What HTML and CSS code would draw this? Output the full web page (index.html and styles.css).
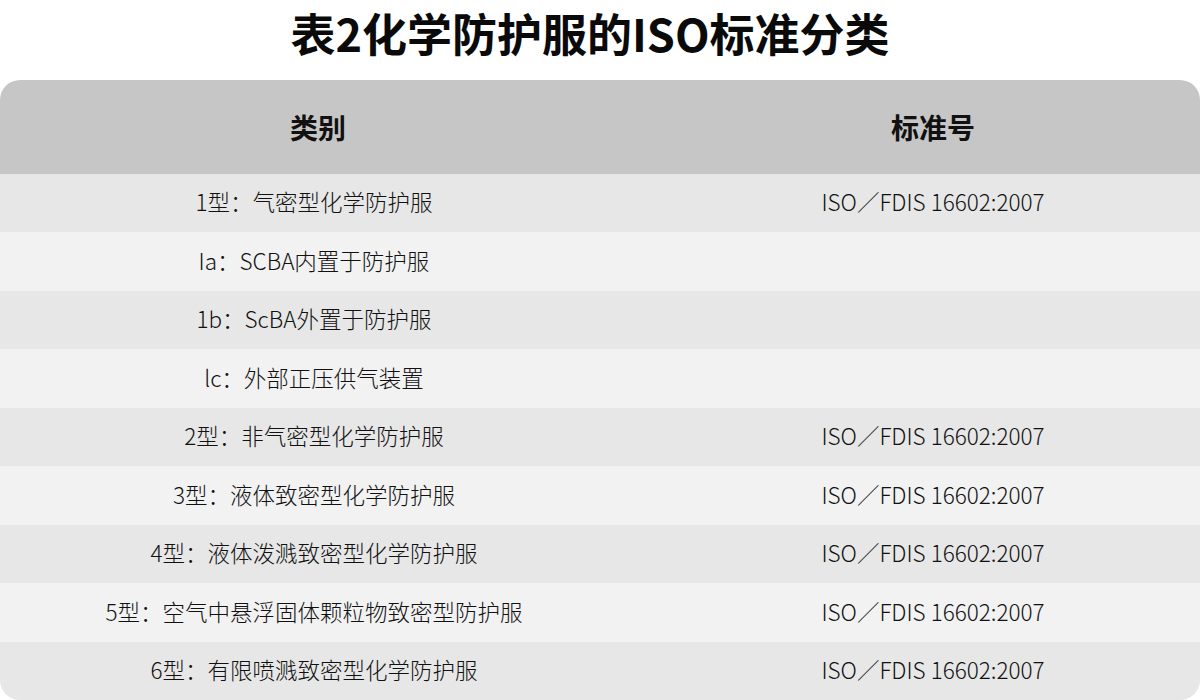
FILE: index.html
```html
<!DOCTYPE html>
<html lang="zh">
<head>
<meta charset="utf-8">
<title>表2化学防护服的ISO标准分类</title>
<link rel="stylesheet" href="styles.css">
</head>
<body>
<h1 class="title">表2化学防护服的ISO标准分类</h1>
<div class="table">
  <div class="row head"><div class="c1">类别</div><div class="c2">标准号</div></div>
  <div class="row odd"><div class="c1">1型：气密型化学防护服</div><div class="c2">ISO／FDIS 16602:2007</div></div>
  <div class="row even"><div class="c1">Ia：SCBA内置于防护服</div><div class="c2"></div></div>
  <div class="row odd"><div class="c1">1b：ScBA外置于防护服</div><div class="c2"></div></div>
  <div class="row even"><div class="c1">lc：外部正压供气装置</div><div class="c2"></div></div>
  <div class="row odd"><div class="c1">2型：非气密型化学防护服</div><div class="c2">ISO／FDIS 16602:2007</div></div>
  <div class="row even"><div class="c1">3型：液体致密型化学防护服</div><div class="c2">ISO／FDIS 16602:2007</div></div>
  <div class="row odd"><div class="c1">4型：液体泼溅致密型化学防护服</div><div class="c2">ISO／FDIS 16602:2007</div></div>
  <div class="row even"><div class="c1">5型：空气中悬浮固体颗粒物致密型防护服</div><div class="c2">ISO／FDIS 16602:2007</div></div>
  <div class="row odd"><div class="c1">6型：有限喷溅致密型化学防护服</div><div class="c2">ISO／FDIS 16602:2007</div></div>
</div>
</body>
</html>
```

FILE: styles.css
```css
html, body {
  margin: 0;
  padding: 0;
  background: #ffffff;
}
body {
  width: 1200px;
  height: 700px;
  overflow: hidden;
  font-family: "Noto Sans CJK SC", "Noto Sans", sans-serif;
  color: #111111;
  display: flex;
  flex-direction: column;
}
.title {
  margin: 0;
  flex: 0 0 80px;
  display: flex;
  align-items: center;
  justify-content: center;
  font-size: 45px;
  font-weight: 700;
  line-height: 1;
  padding-bottom: 16px;
  padding-right: 20px;
  box-sizing: border-box;
  color: #0a0a0a;
}
.table {
  flex: 1;
  display: flex;
  flex-direction: column;
  border-radius: 20px;
  overflow: hidden;
}
.row {
  display: grid;
  grid-template-columns: 628px 1fr;
  align-items: center;
  flex: 1;
  font-size: 22.5px;
  font-weight: 300;
  line-height: 1;
  padding-bottom: 3px;
}
.row .c1, .row .c2 {
  text-align: center;
}
.row .c2 {
  padding-left: 38px;
}
.head {
  flex: 0 0 94px;
  background: #c6c6c6;
  font-size: 28px;
  font-weight: 700;
  padding-bottom: 0;
}
.head .c1 {
  padding-left: 8px;
}
.odd {
  background: #e7e7e7;
}
.even {
  background: #f2f2f2;
}
```
